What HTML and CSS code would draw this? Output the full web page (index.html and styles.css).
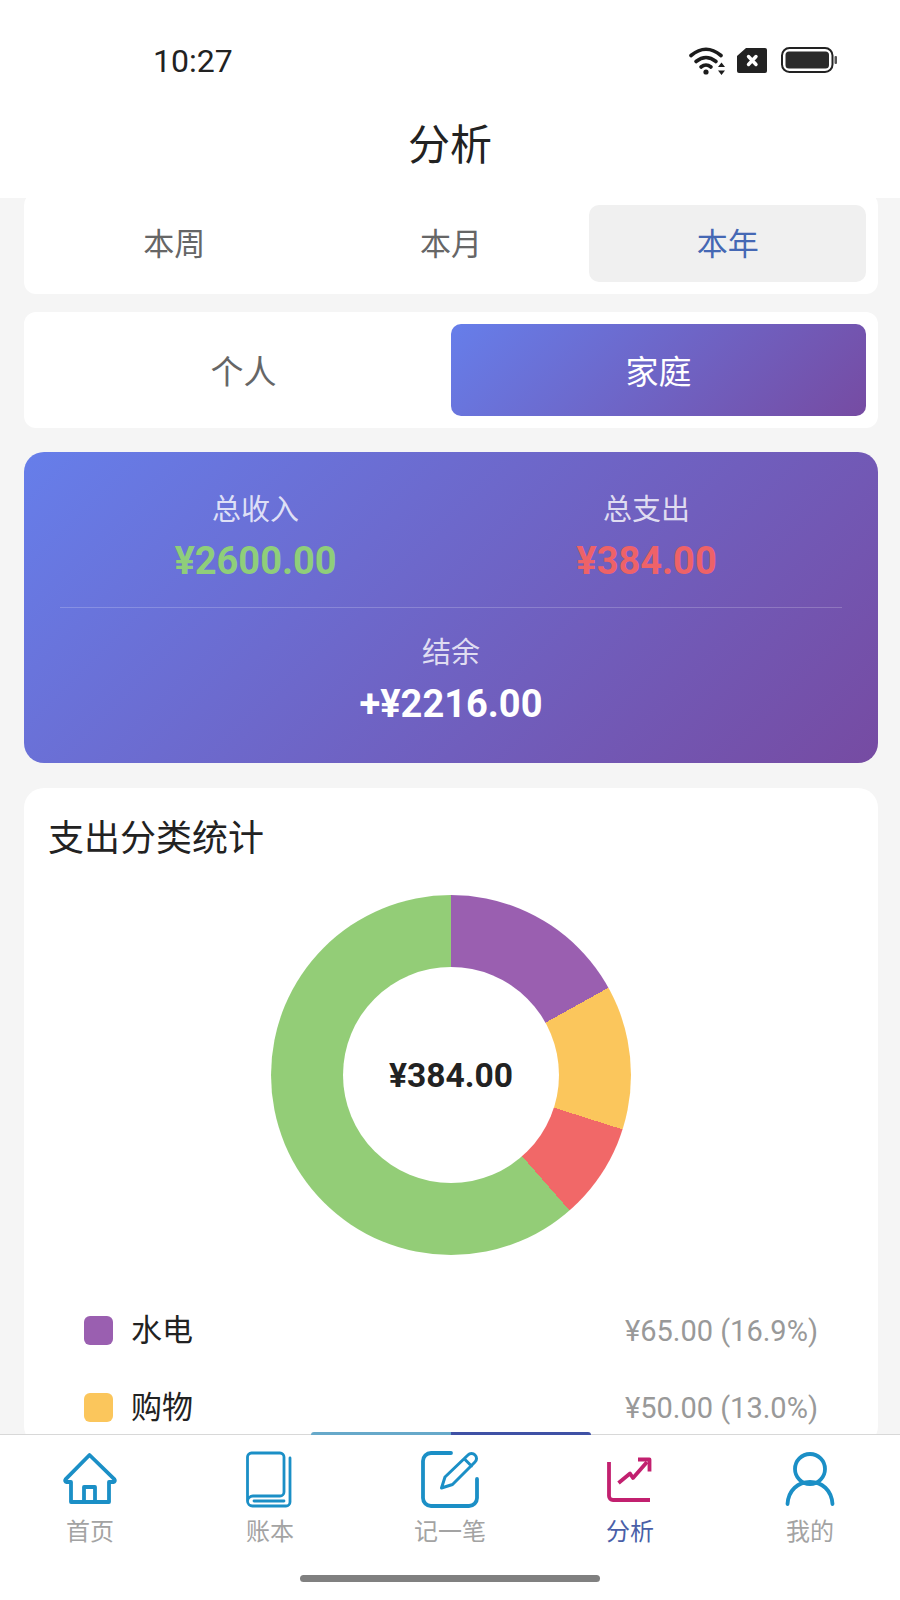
FILE: index.html
```html
<!DOCTYPE html>
<html lang="zh-CN">
<head>
<meta charset="utf-8">
<title>分析</title>
<link rel="stylesheet" href="styles.css">
</head>
<body>
<div class="app">
  <header class="header">
    <div class="status">
      <span class="time">10:27</span>
      <div class="status-icons">
        <svg class="ic-wifi" viewBox="0 0 38 29" fill="none" stroke="#1c1c1c" stroke-width="3.6" stroke-linecap="round">
          <path d="M2 9.5 Q17 -3 32 9.5"/>
          <path d="M7 15.5 Q17 7.5 27 15.5"/>
          <path d="M12 21 Q17 17 22 21"/>
          <circle cx="17" cy="26" r="2.6" fill="#1c1c1c" stroke="none"/>
          <path d="M32.5 16.5 L36 21 H29 Z M32.5 29 L29 24.5 H36 Z" fill="#1c1c1c" stroke="none"/>
        </svg>
        <svg class="ic-sim" viewBox="0 0 30 25">
          <path d="M9 0 H28 a2 2 0 0 1 2 2 V23 a2 2 0 0 1 -2 2 H2 a2 2 0 0 1 -2 -2 V8 Z" fill="#222"/>
          <path d="M11.5 8.5 L19 16.5 M19 8.5 L11.5 16.5" stroke="#fff" stroke-width="3.4" stroke-linecap="round"/>
        </svg>
        <svg class="ic-batt" viewBox="0 0 56 26">
          <rect x="1" y="1" width="50.500" height="24" rx="7.500" fill="none" stroke="#222" stroke-width="2"/>
          <rect x="4.500" y="4.500" width="43.500" height="17" rx="3.500" fill="#2a2a2a"/>
          <rect x="53.500" y="9" width="2.500" height="8" rx="1" fill="#555"/>
        </svg>
      </div>
    </div>
    <h1 class="title">分析</h1>
  </header>

  <main class="content">
    <section class="card seg seg-period">
      <div class="seg-item">本周</div>
      <div class="seg-item">本月</div>
      <div class="seg-item seg-on-plain">本年</div>
    </section>

    <section class="card seg seg-scope">
      <div class="seg-item">个人</div>
      <div class="seg-item seg-on-grad">家庭</div>
    </section>

    <section class="summary">
      <div class="summary-top">
        <div class="stat">
          <div class="stat-label">总收入</div>
          <div class="stat-value income">¥2600.00</div>
        </div>
        <div class="stat">
          <div class="stat-label">总支出</div>
          <div class="stat-value expense">¥384.00</div>
        </div>
      </div>
      <div class="stat stat-balance">
        <div class="stat-label">结余</div>
        <div class="stat-value">+¥2216.00</div>
      </div>
    </section>

    <section class="card chart-card">
      <h2 class="chart-title">支出分类统计</h2>
      <div class="donut">
        <div class="donut-hole">¥384.00</div>
      </div>
      <ul class="legend">
        <li class="legend-row">
          <span class="swatch swatch-purple"></span>
          <span class="legend-name">水电</span>
          <span class="legend-value">¥65.00 (16.9%)</span>
        </li>
        <li class="legend-row">
          <span class="swatch swatch-yellow"></span>
          <span class="legend-name">购物</span>
          <span class="legend-value">¥50.00 (13.0%)</span>
        </li>
      </ul>
    </section>
  </main>

  <nav class="tabbar">
    <div class="progress"><span class="progress-a"></span><span class="progress-b"></span></div>
    <div class="tabs">
      <div class="tab">
        <svg class="tab-icon" viewBox="0 0 60 60" fill="none" stroke="#1b8fc6" stroke-width="3.8" stroke-linejoin="round" stroke-linecap="round">
          <path d="M11 32 H6.500 a1.600 1.600 0 0 1 -1 -2.600 L29.500 5 L54.500 29.400 a1.600 1.600 0 0 1 -1 2.600 H49 V52 H11 Z"/>
          <path d="M24 52 V37 H35 V52"/>
        </svg>
        <span class="tab-label">首页</span>
      </div>
      <div class="tab">
        <svg class="tab-icon" viewBox="0 0 60 60" fill="none" stroke="#1b8fc6" stroke-width="2.800" stroke-linecap="round" stroke-linejoin="round">
          <path d="M7.500 51 V7 a4 4 0 0 1 4 -4 H40 a4 4 0 0 1 4 4 V42 a4 4 0 0 1 -4 4 H13 a5.500 5.500 0 0 0 -5.500 5 a5 5 0 0 0 5 5 H46 a4 4 0 0 0 4 -4 V8"/>
          <path d="M14 51 H44"/>
        </svg>
        <span class="tab-label">账本</span>
      </div>
      <div class="tab">
        <svg class="tab-icon" viewBox="0 0 60 60" fill="none" stroke="#1b8fc6" stroke-linecap="round" stroke-linejoin="round">
          <path d="M31 3 H11 a8 8 0 0 0 -8 8 V48 a8 8 0 0 0 8 8 H49 a8 8 0 0 0 8 -8 V29" stroke-width="3.800"/>
          <path d="M21.500 38 L25 27 L48 5 a4.800 4.800 0 0 1 7 0 a4.800 4.800 0 0 1 0 7 L32.500 34.500 Z M44.500 9 L51.500 16" stroke-width="3"/>
        </svg>
        <span class="tab-label">记一笔</span>
      </div>
      <div class="tab">
        <svg class="tab-icon" viewBox="0 0 60 60" fill="none" stroke="#c2206f" stroke-width="3.800" stroke-linejoin="round">
          <path d="M9 12 V46 a4 4 0 0 0 4 4 H50"/>
          <path d="M18.500 33 L30 23.500 L33 28 L47 12"/>
          <path d="M38 9.500 H49.500 V21.500"/>
        </svg>
        <span class="tab-label tab-label-on">分析</span>
      </div>
      <div class="tab">
        <svg class="tab-icon" viewBox="0 0 60 60" fill="none" stroke="#1b8fc6" stroke-width="3.800" stroke-linecap="round">
          <circle cx="30" cy="19" r="15"/>
          <path d="M7.500 54 C8.500 40 18 32 30 32 S51.500 40 52.500 54"/>
        </svg>
        <span class="tab-label">我的</span>
      </div>
    </div>
    <div class="home-bar"></div>
  </nav>
</div>
</body>
</html>
```
FILE: styles.css
```css
* { box-sizing: border-box; }
html, body { margin: 0; padding: 0; }
body {
  width: 900px;
  height: 1600px;
  overflow: hidden;
  background: #f5f5f5;
  font-family: Roboto, "Noto Sans CJK SC", sans-serif;
  color: #222;
}
.app { display: flex; flex-direction: column; height: 1600px; }

.header { position: relative; z-index: 2; flex: none; height: 198px; background: #fff; }
.status { display: flex; align-items: center; justify-content: space-between; height: 122px; padding: 0 63px 0 153px; }
.time { font-size: 32px; color: #222; }
.status-icons { display: flex; align-items: center; margin-top: -2px; }
.ic-wifi { width: 38px; height: 29px; margin-right: 10px; }
.ic-sim { width: 30px; height: 25px; margin-right: 14px; }
.ic-batt { width: 56px; height: 26px; }
.title { margin: 0; font-size: 42px; line-height: 48px; font-weight: 400; text-align: center; color: #222; }

.content { flex: 1; min-height: 0; overflow: hidden; padding: 0 22px 0 24px; }
.card { background: #fff; border-radius: 12px; }

.seg { display: flex; padding: 12px; }
.seg-item { flex: 1; display: flex; align-items: center; justify-content: center; color: #666; border-radius: 10px; }
.seg-period { margin-top: -5px; height: 101px; }
.seg-period .seg-item { font-size: 31px; padding-bottom: 4px; }
.seg-on-plain { background: #f0f0f0; color: #4568b4; }
.seg-scope { margin-top: 18px; height: 116px; }
.seg-scope .seg-item { font-size: 33px; }
.seg-on-grad { background: linear-gradient(135deg, #667eea, #764ba2); color: #fff; }

.summary {
  margin-top: 24px;
  height: 311px;
  padding: 38px 36px 0;
  border-radius: 20px;
  background: linear-gradient(135deg, #667eea, #764ba2);
  color: #fff;
}
.summary-top { display: flex; padding-bottom: 21px; border-bottom: 1px solid rgba(255,255,255,.2); }
.stat { flex: 1; text-align: center; }
.stat-balance { padding-top: 25px; }
.stat-label { font-size: 29px; line-height: 40px; color: rgba(255,255,255,.8); }
.stat-value { margin-top: 6px; font-size: 38px; line-height: 50px; font-weight: 700; color: #fff; }
.stat-value.income { color: #8fce7a; }
.stat-value.expense { color: #ee6268; }

.chart-card { margin-top: 25px; padding: 25px 24px 0; border-radius: 20px; }
.chart-title { margin: 0; font-size: 36px; line-height: 52px; font-weight: 400; color: #222; }
.donut {
  display: flex;
  align-items: center;
  justify-content: center;
  width: 360px;
  height: 360px;
  margin: 30px auto 0;
  border-radius: 50%;
  background: conic-gradient(#9a5fb0 0 61deg, #fbc65c 61deg 107.6deg, #f16868 107.6deg 138.8deg, #93cd77 138.8deg 360deg);
}
.donut-hole {
  display: flex;
  align-items: center;
  justify-content: center;
  width: 216px;
  height: 216px;
  border-radius: 50%;
  background: #fff;
  font-size: 33.6px;
  font-weight: 700;
  color: #222;
}
.legend { margin: 37px 0 0; padding: 0 36px; list-style: none; }
.legend-row { display: flex; align-items: center; height: 77px; }
.swatch { flex: none; width: 29px; height: 29px; border-radius: 6px; }
.swatch-purple { background: #9a5fb0; }
.swatch-yellow { background: #fbc65c; }
.legend-name { margin-left: 18px; padding-bottom: 6px; font-size: 31px; color: #222; }
.legend-value { margin-left: auto; font-size: 29px; color: #999; }

.tabbar { position: relative; z-index: 2; flex: none; height: 166px; background: #fff; border-top: 1px solid #d8d8d8; }
.progress { position: absolute; left: 311px; top: -3px; display: flex; width: 280px; height: 3px; border-radius: 3px 3px 0 0; overflow: hidden; }
.progress-a { flex: 1; background: #67a9ca; }
.progress-b { flex: 1; background: #3f51a5; }
.tabs { display: flex; padding-top: 15px; }
.tab { flex: 1; display: flex; flex-direction: column; align-items: center; }
.tab-icon { display: block; width: 60px; height: 60px; }
.tab-label { margin-top: 5px; font-size: 24px; line-height: 34px; color: #a3a3a3; }
.tab-label-on { color: #4a5fa8; }
.home-bar { width: 300px; height: 7px; margin: 26px auto 0; border-radius: 4px; background: #808080; }
```
